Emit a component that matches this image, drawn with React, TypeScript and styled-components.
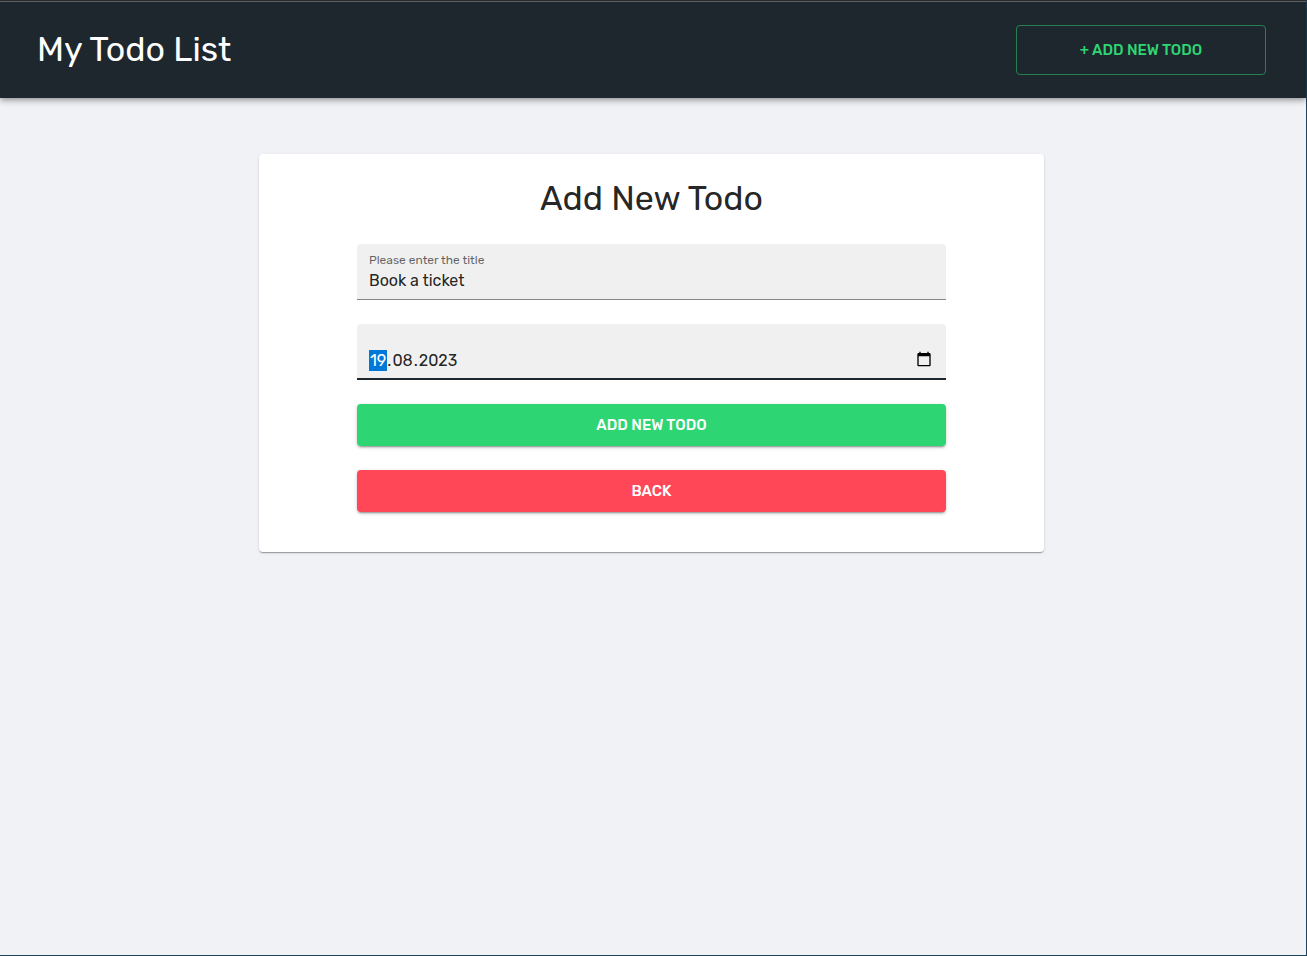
import React, { useEffect, useRef, useState } from "react";
import styled, { createGlobalStyle } from "styled-components";

const GlobalStyle = createGlobalStyle`
  *, *::before, *::after { box-sizing: border-box; }
  body {
    margin: 0;
    background: #f1f2f6;
    color: rgba(0, 0, 0, 0.87);
    font-family: Rubik, Roboto, "Liberation Sans", sans-serif;
  }
  button, input { font-family: inherit; }
`;

const Shell = styled.div`
  min-height: 100vh;
  display: flex;
  flex-direction: column;
  border-top: 1px solid #2b2d31;
  border-right: 1px solid #1f4160;
  border-bottom: 1px solid #1f4658;
`;

const Header = styled.header`
  display: flex;
  align-items: center;
  justify-content: space-between;
  gap: 24px;
  padding: 23px 40px 23px 37px;
  border-top: 1px solid #5f6165;
  background: #1e272e;
  box-shadow: 0 2px 4px -1px rgba(0, 0, 0, 0.2), 0 4px 5px 0 rgba(0, 0, 0, 0.14),
    0 1px 10px 0 rgba(0, 0, 0, 0.12);
`;

const Brand = styled.h1`
  margin: 0;
  color: #fff;
  font-size: 34px;
  font-weight: 400;
  line-height: 42px;
`;

const Button = styled.button<{ $fill?: string }>`
  width: 100%;
  height: 42px;
  border: 0;
  border-radius: 4px;
  background: ${(p) => p.$fill ?? "transparent"};
  color: #fff;
  font-size: 15px;
  font-weight: 500;
  line-height: 24px;
  text-transform: uppercase;
  cursor: pointer;
  box-shadow: 0 3px 1px -2px rgba(0, 0, 0, 0.2), 0 2px 2px 0 rgba(0, 0, 0, 0.14),
    0 1px 5px 0 rgba(0, 0, 0, 0.12);
`;

const OutlineButton = styled(Button)`
  width: 250px;
  height: 50px;
  border: 1px solid #278051;
  color: #2ed573;
  box-shadow: none;
`;

const Main = styled.main`
  display: flex;
  justify-content: center;
  align-items: flex-start;
  padding: 56px 27px 24px 24px;
`;

const Card = styled.section`
  display: flex;
  flex-direction: column;
  align-items: center;
  gap: 24px;
  width: 100%;
  max-width: 785px;
  padding: 24px 24px 40px;
  border-radius: 4px;
  background: #fff;
  box-shadow: 0 2px 1px -1px rgba(0, 0, 0, 0.2), 0 1px 1px 0 rgba(0, 0, 0, 0.14),
    0 1px 3px 0 rgba(0, 0, 0, 0.12);
`;

const Title = styled.h2`
  margin: 0;
  font-size: 34px;
  font-weight: 400;
  line-height: 42px;
`;

const Form = styled.form`
  display: flex;
  flex-direction: column;
  gap: 24px;
  width: 100%;
  max-width: 589px;
`;

const Field = styled.div<{ $active?: boolean }>`
  display: flex;
  flex-direction: column;
  justify-content: flex-end;
  gap: 2px;
  height: 56px;
  padding: 0 12px ${(p) => (p.$active ? 7 : 8)}px;
  border-bottom: ${(p) => (p.$active ? "2px solid #1e272e" : "1px solid #868686")};
  border-radius: 4px 4px 0 0;
  background: #f0f0f0;
`;

const Label = styled.label`
  color: rgba(0, 0, 0, 0.6);
  font-size: 12px;
  line-height: 16px;
`;

const Input = styled.input`
  width: 100%;
  height: 21px;
  padding: 0;
  border: 0;
  outline: 0;
  background: transparent;
  color: rgba(0, 0, 0, 0.87);
  font-size: 16px;
  line-height: 21px;
`;

const DateRow = styled.div`
  display: flex;
  align-items: flex-start;
  font-size: 16px;
  line-height: 21px;
`;

const DatePart = styled(Input)`
  width: auto;
  padding: 0 1px;
  field-sizing: content;
  caret-color: transparent;

  &:focus {
    background: #0078d7;
    color: #fff;
  }
  &::selection {
    background: #0078d7;
    color: #fff;
  }
`;

const PickerButton = styled.button`
  display: flex;
  margin-left: auto;
  padding: 1px 2px;
  border: 0;
  background: transparent;
  color: #000;
  cursor: pointer;
`;

const CalendarIcon = () => (
  <svg width="16" height="16" viewBox="0 0 24 24" fill="currentColor" aria-hidden="true">
    <path d="M20 3h-1V1h-2v2H7V1H5v2H4c-1.1 0-2 .9-2 2v16c0 1.1.9 2 2 2h16c1.1 0 2-.9 2-2V5c0-1.1-.9-2-2-2zm0 18H4V8h16v13z" />
  </svg>
);

export default function App() {
  const [title, setTitle] = useState("Book a ticket");
  const [date, setDate] = useState({ day: "19", month: "08", year: "2023" });
  const dayRef = useRef<HTMLInputElement>(null);

  const focusDay = () => {
    dayRef.current?.focus();
    dayRef.current?.select();
  };

  useEffect(focusDay, []);

  const edit = (part: keyof typeof date) => (e: React.ChangeEvent<HTMLInputElement>) =>
    setDate({ ...date, [part]: e.target.value });

  return (
    <>
      <GlobalStyle />
      <Shell>
        <Header>
          <Brand>My Todo List</Brand>
          <OutlineButton type="button">+ Add New Todo</OutlineButton>
        </Header>
        <Main>
          <Card>
            <Title>Add New Todo</Title>
            <Form onSubmit={(e) => e.preventDefault()}>
              <Field>
                <Label htmlFor="title">Please enter the title</Label>
                <Input id="title" value={title} onChange={(e) => setTitle(e.target.value)} />
              </Field>
              <Field $active role="group" aria-label="Date">
                <DateRow>
                  <DatePart
                    ref={dayRef}
                    aria-label="Day"
                    maxLength={2}
                    value={date.day}
                    onChange={edit("day")}
                  />
                  <span>.</span>
                  <DatePart
                    aria-label="Month"
                    maxLength={2}
                    value={date.month}
                    onChange={edit("month")}
                  />
                  <span>.</span>
                  <DatePart
                    aria-label="Year"
                    maxLength={4}
                    value={date.year}
                    onChange={edit("year")}
                  />
                  <PickerButton type="button" aria-label="Pick a date" onClick={focusDay}>
                    <CalendarIcon />
                  </PickerButton>
                </DateRow>
              </Field>
              <Button type="submit" $fill="#2ed573">
                Add New Todo
              </Button>
              <Button type="button" $fill="#ff4757">
                Back
              </Button>
            </Form>
          </Card>
        </Main>
      </Shell>
    </>
  );
}
